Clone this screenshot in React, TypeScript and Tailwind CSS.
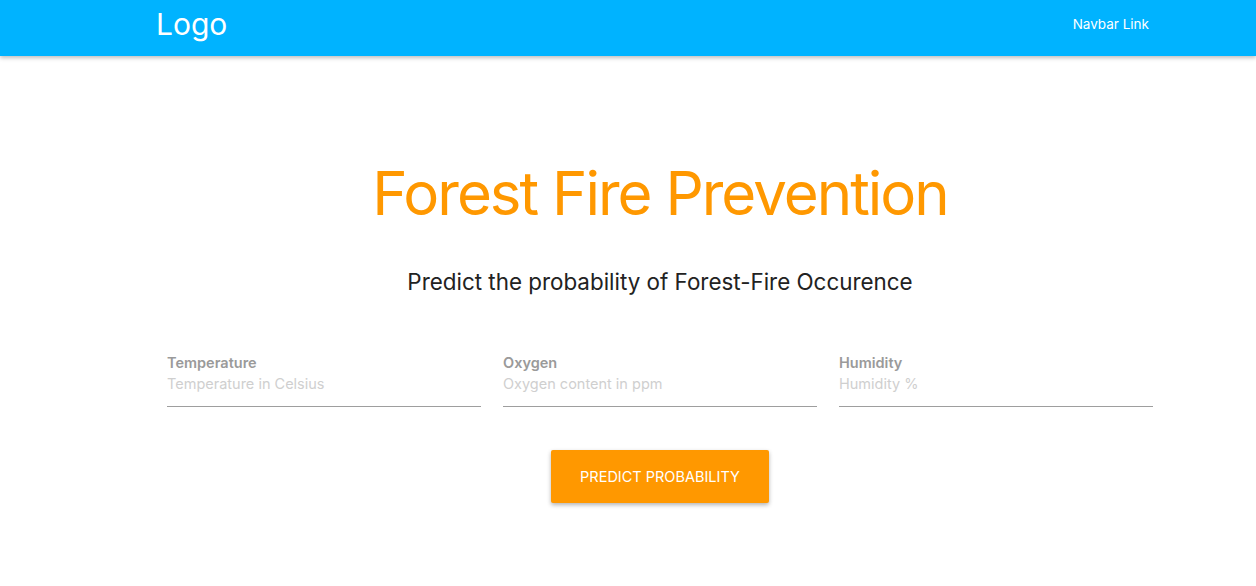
export default function App() {
  const fields = [
    { label: 'Temperature', placeholder: 'Temperature in Celsius' },
    { label: 'Oxygen', placeholder: 'Oxygen content in ppm' },
    { label: 'Humidity', placeholder: 'Humidity %' },
  ];

  return (
    <div className="min-h-screen bg-white" style={{ fontFamily: 'Inter, "Noto Sans", sans-serif' }}>
      {/* Navbar */}
      <nav className="h-[56px] bg-[#00b3ff] shadow-[0_2px_4px_rgba(0,0,0,0.25)] flex items-start justify-between pl-[156px] pr-[107px]">
        <a className="mt-[9px] text-[30px] text-white leading-none">Logo</a>
        <a className="mt-[18px] text-[13.5px] text-white leading-none">Navbar Link</a>
      </nav>

      {/* Main */}
      <div className="ml-[167px] w-[986px] flex flex-col items-center">
        <h1 className="mt-[101px] text-[60px] leading-[72px] text-[#ff9800] tracking-[-2px]">Forest Fire Prevention</h1>
        <h5 className="mt-[37px] text-[22.4px] leading-[32px] text-[#222]">Predict the probability of Forest-Fire Occurence</h5>

        <div className="mt-[55px] w-full grid grid-cols-3 gap-[22px]">
          {fields.map((f) => (
            <div key={f.label} className="flex flex-col">
              <label className="text-[14.5px] font-semibold text-[#9a9a9a] leading-[20px]">{f.label}</label>
              <input
                placeholder={f.placeholder}
                className="h-[34px] border-b border-[#9e9e9e] outline-none text-[14.5px] placeholder:text-[#cfcfcf] pb-[12px]"
              />
            </div>
          ))}
        </div>

        <button className="mt-[43px] w-[218px] h-[53px] bg-[#ff9800] text-white text-[14.5px] uppercase rounded-[2px] shadow-[0_2px_4px_rgba(0,0,0,0.3)]">
          Predict Probability
        </button>
      </div>
    </div>
  );
}
